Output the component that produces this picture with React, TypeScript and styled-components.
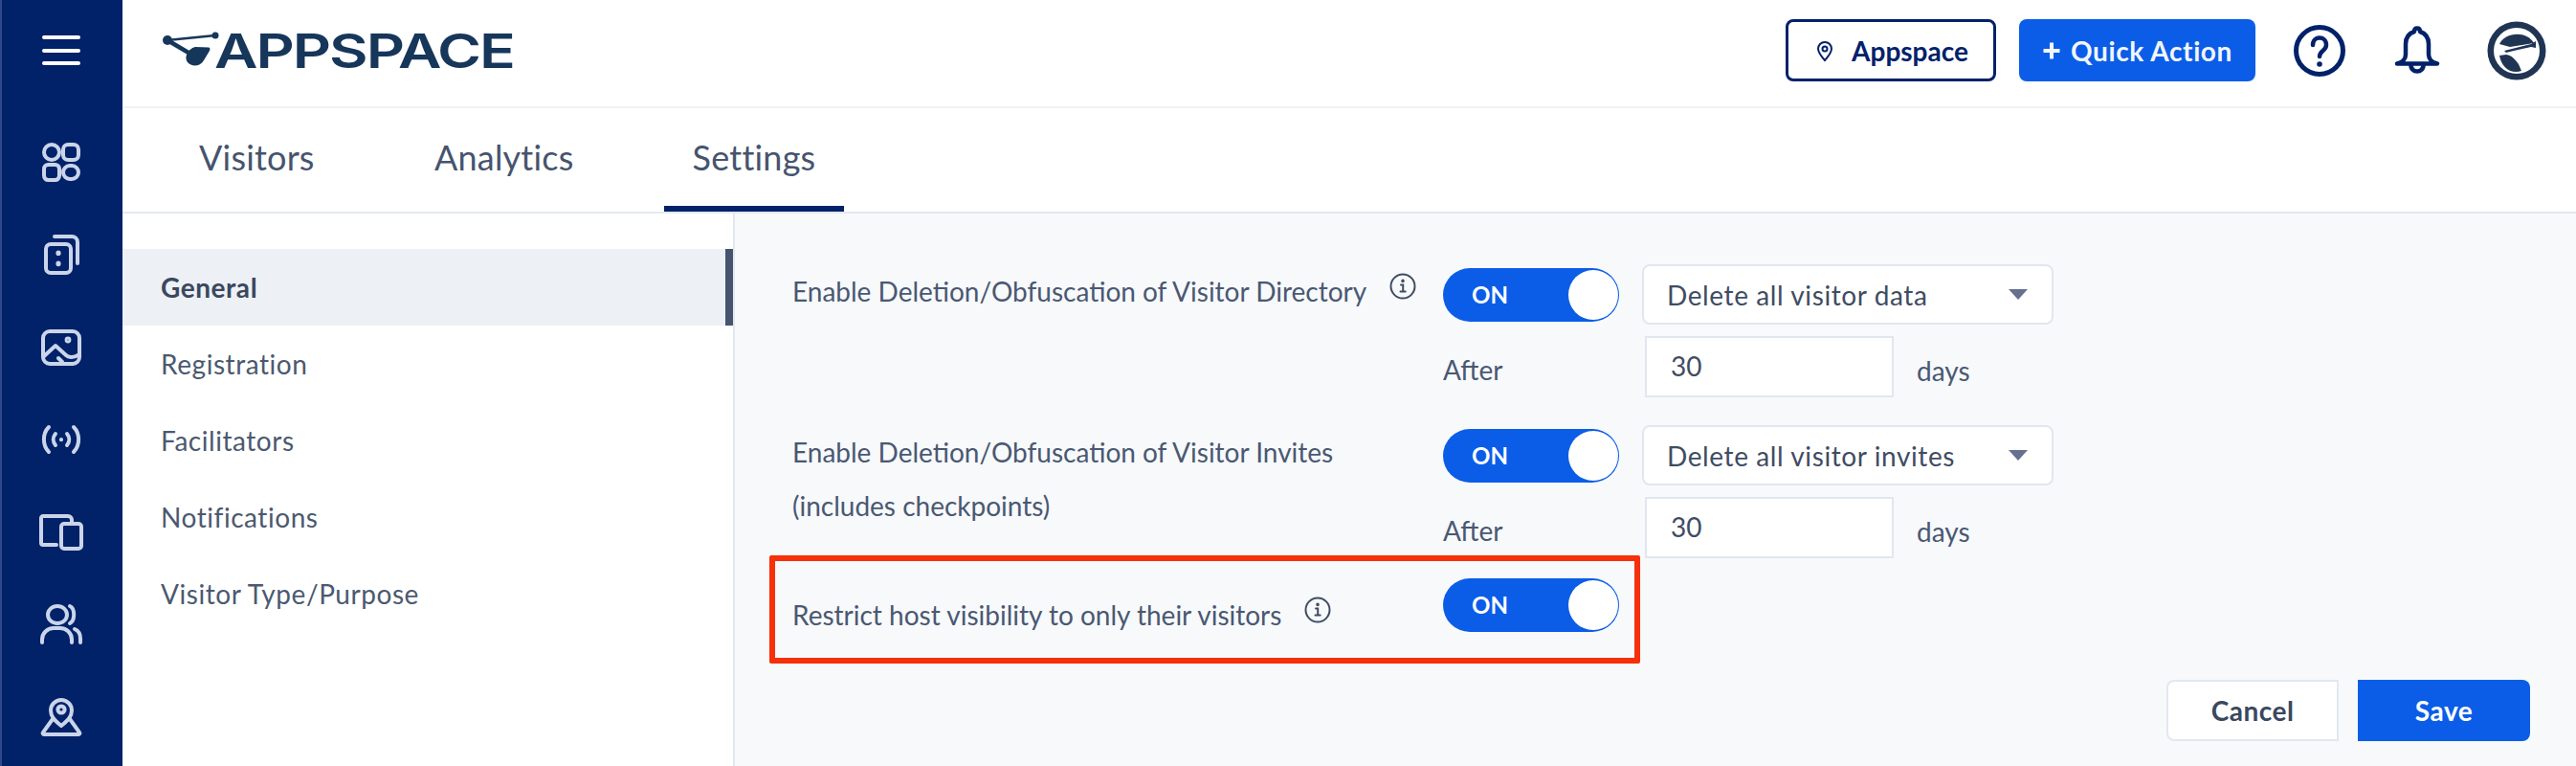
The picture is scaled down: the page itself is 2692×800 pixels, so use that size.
import React from 'react';
import styled, { createGlobalStyle } from 'styled-components';

const Global = createGlobalStyle`
  html, body { margin: 0; padding: 0; background: #fff; }
  * { box-sizing: border-box; }
  body { font-family: "Lato", "Open Sans", sans-serif; }
`;

const Page = styled.div`
  position: relative;
  display: flex;
  width: 2692px;
  height: 800px;
  overflow: hidden;
`;

const Rail = styled.aside`
  flex: 0 0 128px;
  display: flex;
  flex-direction: column;
  align-items: center;
  background: #012169;
  border-left: 2px solid #2e4a8c;
  padding-top: 37px;
  overflow: hidden;
`;

const Burger = styled.div`
  flex: none;
  display: flex;
  flex-direction: column;
  gap: 9.500px;
  width: 40px;
  margin-bottom: 78px;
  margin-right: 2px;
  span { display: block; height: 4px; border-radius: 2px; background: #fff; }
`;

const RailIcon = styled.div`
  flex: none;
  width: 48px;
  height: 48px;
  margin-bottom: 48.300px;
  margin-right: 2px;
  svg { display: block; width: 48px; height: 48px; fill: none; stroke: #cad5ea; stroke-width: 2; stroke-linecap: round; stroke-linejoin: round; }
`;

const Main = styled.div`
  flex: 1;
  min-width: 0;
  display: flex;
  flex-direction: column;
`;

const Header = styled.header`
  flex: 0 0 113px;
  display: flex;
  align-items: center;
  padding: 0 0 6px 42px;
  border-bottom: 2px solid #f0f2f5;
`;

const Logo = styled.div`
  display: flex;
  align-items: center;
  height: 40px;
  svg { display: block; width: 60px; height: 40px; margin-top: -1px; }
`;

const LogoWord = styled.span`
  font-family: "Inter", sans-serif;
  font-size: 50px;
  line-height: 40px;
  font-weight: 600;
  color: #16365a;
  letter-spacing: -1.600px;
  margin-left: -6px;
  transform: scaleX(1.250);
  transform-origin: left center;
`;

const HeaderRight = styled.div`
  margin-left: auto;
  display: flex;
  align-items: center;
`;

const LocationButton = styled.button`
  display: flex;
  align-items: center;
  justify-content: center;
  gap: 16px;
  width: 220px;
  height: 65px;
  margin-right: 24px;
  background: #fff;
  border: 3px solid #012169;
  border-radius: 8px;
  font: 700 28px "Lato", sans-serif;
  color: #012169;
  svg { width: 24px; height: 24px; fill: none; stroke: #012169; stroke-width: 2; }
`;

const QuickButton = styled.button`
  display: flex;
  align-items: center;
  justify-content: center;
  gap: 10px;
  width: 247px;
  height: 65px;
  margin-right: 39px;
  background: #0b5de8;
  border: none;
  border-radius: 8px;
  font: 700 28px "Lato", sans-serif;
  letter-spacing: 0.600px;
  color: #f2f6ff;
  svg { width: 20px; height: 20px; }
`;

const TopIcon = styled.div<{ $w: number; $gap: number }>`
  width: ${(p) => p.$w}px;
  margin-right: ${(p) => p.$gap}px;
  display: flex;
  justify-content: center;
  svg { display: block; }
`;

const Tabs = styled.nav`
  flex: 0 0 110px;
  display: flex;
  border-bottom: 2px solid #e2e8f0;
  padding-left: 80px;
`;

const Tab = styled.div<{ $active?: boolean; $w: number }>`
  width: ${(p) => p.$w}px;
  height: 108px;
  padding-top: 29px;
  font-size: 36px;
  line-height: 44px;
  letter-spacing: 0.200px;
  color: #46546e;
  text-align: ${(p) => (p.$active ? 'center' : 'left')};
  border-bottom: ${(p) => (p.$active ? '6px solid #012169' : 'none')};
`;

const Body = styled.div`
  flex: 1;
  display: flex;
  min-height: 0;
`;

const SideNav = styled.div`
  flex: 0 0 640px;
  padding-top: 37px;
  border-right: 2px solid #e2e8f0;
`;

const NavItem = styled.div<{ $active?: boolean }>`
  height: 80px;
  padding-left: 40px;
  display: flex;
  align-items: center;
  font-size: 28px;
  letter-spacing: 0.550px;
  font-weight: ${(p) => (p.$active ? 700 : 400)};
  color: ${(p) => (p.$active ? '#3a485f' : '#4b5970')};
  background: ${(p) => (p.$active ? '#edf1f5' : 'transparent')};
  border-right: ${(p) => (p.$active ? '8px solid #46546e' : 'none')};
`;

const Panel = styled.div`
  flex: 1;
  background: #f7f9fb;
  padding: 53px 48px 0 60px;
  display: flex;
  flex-direction: column;
`;

const SettingRow = styled.div<{ $h: number }>`
  display: grid;
  grid-template-columns: 680px 209px 429px;
  grid-template-rows: 63px auto;
  height: ${(p) => p.$h}px;
`;

const Label = styled.div<{ $top: number }>`
  grid-row: 1 / span 2;
  padding-top: ${(p) => p.$top}px;
  font-size: 28px;
  line-height: 56px;
  color: #4a5872;
`;

const Info = styled.svg`
  display: inline-block;
  width: 28px;
  height: 28px;
  margin-left: 24px;
  vertical-align: 2px;
  fill: none;
  stroke: #3f4c63;
  stroke-width: 2;
  stroke-linecap: round;
`;

const Toggle = styled.div<{ $top: number }>`
  position: relative;
  margin-top: ${(p) => p.$top}px;
  width: 184px;
  height: 56px;
  border-radius: 28px;
  background: #0b5de8;
  color: #fff;
  font-size: 24px;
  font-weight: 700;
  line-height: 56px;
  padding-left: 30px;
  &::after {
    content: '';
    position: absolute;
    top: 2px;
    right: 1px;
    width: 52px;
    height: 52px;
    border-radius: 50%;
    background: #fff;
  }
`;

const Select = styled.div`
  height: 63px;
  margin-left: -1px;
  display: flex;
  align-items: center;
  justify-content: space-between;
  padding: 0 25px 0 24px;
  background: #fff;
  border: 2px solid #e2e6f0;
  border-radius: 8px;
  font-size: 28px;
  letter-spacing: 0.600px;
  color: #3f4c63;
`;

const Caret = styled.span`
  width: 0;
  height: 0;
  border-left: 10px solid transparent;
  border-right: 10px solid transparent;
  border-top: 11px solid #65718f;
`;

const AfterLine = styled.div`
  grid-column: 2 / 4;
  display: flex;
  align-items: center;
  margin-top: 12px;
  height: 64px;
  font-size: 28px;
  color: #4a5872;
`;

const AfterLabel = styled.span`
  width: 211px;
  padding-top: 6px;
`;

const DaysInput = styled.div`
  width: 260px;
  height: 64px;
  display: flex;
  align-items: center;
  padding: 0 0 2px 25px;
  background: #fff;
  border: 2px solid #e2e6f0;
  color: #3f4c63;
`;

const Days = styled.span`
  margin-left: 24px;
  padding-top: 8px;
`;

const Highlight = styled.div`
  position: absolute;
  left: 804px;
  top: 580px;
  width: 910px;
  height: 113px;
  border: 6px solid #f5300b;
  border-radius: 2px;
  pointer-events: none;
`;

const Actions = styled.div`
  margin-top: auto;
  margin-bottom: 26px;
  display: flex;
  justify-content: flex-end;
  gap: 20px;
`;

const CancelButton = styled.button`
  width: 180px;
  height: 64px;
  background: #fff;
  border: 2px solid #e2e8f0;
  border-radius: 8px 0 0 8px;
  font: 700 28px "Lato", sans-serif;
  letter-spacing: 0.500px;
  color: #3a485f;
`;

const SaveButton = styled.button`
  width: 180px;
  height: 64px;
  background: #0b5de8;
  border: none;
  border-radius: 0 8px 8px 0;
  font: 700 28px "Lato", sans-serif;
  letter-spacing: 0.500px;
  color: #fff;
`;

const InfoIcon = () => (
  <Info viewBox="0 0 28 28">
    <circle cx="14" cy="14" r="12.500" />
    <path d="M12 12.500h2.200v7M11.500 19.500h5.200" />
    <circle cx="14" cy="8.400" r="0.800" />
  </Info>
);

const railIcons = [
  <svg viewBox="0 0 24 24" key="a"><rect x="3" y="2.500" width="8" height="8" rx="4" /><rect x="13" y="2.500" width="8" height="8" rx="2.600" /><rect x="3" y="13" width="8" height="8" rx="2.200" /><rect x="13" y="13.500" width="8" height="7" rx="3.500" /></svg>,
  <svg viewBox="0 0 24 24" key="b"><rect x="4" y="6.500" width="13" height="15" rx="2.500" /><path d="M8.500 2.500h9a3 3 0 0 1 3 3v11" /><path d="M10.500 11v.2M10.500 16.600v.2" strokeWidth="2.600" /></svg>,
  <svg viewBox="0 0 24 24" key="c"><rect x="2.500" y="3.500" width="19" height="17" rx="3.500" /><path d="M3 16.500l6-5.500 5.500 5c1 .9 3.600 1.800 6.500-.2" /><path d="M12.500 19.500l-2-2" /><circle cx="15.500" cy="8" r="0.700" /></svg>,
  <svg viewBox="0 0 24 24" key="d"><path d="M5.500 5.500c-3.400 3.400-3.400 9.600 0 13M18.500 5.500c3.400 3.400 3.400 9.600 0 13M9 9c-1.500 1.800-1.500 4.200 0 6M15 9c1.500 1.800 1.500 4.200 0 6" /><path d="M12 12v.1" /></svg>,
  <svg viewBox="0 0 24 24" key="e"><path d="M9.500 19H2.500a1 1 0 0 1-1-1V5a1 1 0 0 1 1-1h13a2 2 0 0 1 2 2v2" /><rect x="12" y="8" width="10.500" height="13" rx="1.500" /></svg>,
  <svg viewBox="0 0 24 24" key="f"><ellipse cx="10" cy="7.500" rx="5" ry="4.500" /><path d="M2 22v-1.500a6 6 0 0 1 6-6h3.500a6 6 0 0 1 6 6V22" /><path d="M16.500 3c2.800 1.200 2.800 7.500 0 9M19 15c2 .8 3 3 3 5v2" /></svg>,
  <svg viewBox="0 0 24 24" key="g"><path d="M12 17c-3-2.600-5.500-4.500-5.500-8a5.500 5.500 0 0 1 11 0c0 3.500-2.500 5.400-5.500 8z" /><circle cx="12" cy="8.500" r="1.800" /><path d="M7.500 13.500L2.500 20.500a.6.600 0 0 0 .5 1h18a.6.600 0 0 0 .5-1l-5-7" /></svg>,
];

export default function App() {
  return (
    <Page>
      <Global />
      <Rail>
        <Burger><span /><span /><span /></Burger>
        {railIcons.map((icon) => (
          <RailIcon key={icon.key}>{icon}</RailIcon>
        ))}
      </Rail>
      <Main>
        <Header>
          <Logo>
            <svg viewBox="0 0 60 40" aria-hidden="true">
              <g fill="#16365a" stroke="#16365a">
                <path d="M5 10L55 5" strokeWidth="2.600" fill="none" />
                <path d="M5 10L32 26" strokeWidth="4.500" fill="none" />
                <circle cx="5" cy="10" r="5" stroke="none" />
                <circle cx="55" cy="5" r="3.500" stroke="none" />
                <path d="M34 17L48 17.500C50 18 49.500 20 49 21L43 31C39 38 30 38 26 33C22 28 26 19 34 17Z" stroke="none" />
              </g>
            </svg>
            <LogoWord>APPSPACE</LogoWord>
          </Logo>
          <HeaderRight>
            <LocationButton>
              <svg viewBox="0 0 24 24"><path d="M12 22c-4-4.500-7-8-7-12a7 7 0 0 1 14 0c0 4-3 7.500-7 12z" /><circle cx="12" cy="10" r="2.500" /></svg>
              Appspace
            </LocationButton>
            <QuickButton>
              <svg viewBox="0 0 20 20"><path d="M8 1.500h4V8h6.500v4H12v6.500H8V12H1.500V8H8z" fill="#f2f6ff" /></svg>
              Quick Action
            </QuickButton>
            <TopIcon $w={56} $gap={50}>
              <svg width="56" height="56" viewBox="0 0 56 56" fill="none" stroke="#012169">
                <circle cx="28" cy="28" r="24.500" strokeWidth="5" />
                <path d="M21 22c0-10 14-10 14 0 0 6-7 6-7 12" strokeWidth="4.500" strokeLinecap="round" />
                <circle cx="28" cy="42" r="2.800" fill="#012169" stroke="none" />
              </svg>
            </TopIcon>
            <TopIcon $w={48} $gap={49}>
              <svg width="48" height="52" viewBox="0 0 48 52" fill="none" stroke="#012169" strokeWidth="4.500" strokeLinejoin="round" strokeLinecap="round">
                <path d="M24 2.500c2 0 3 1.500 3 3.500 6 2 9 7 9 13v11c0 4 3 8 9 9.500H3c6-1.500 9-5.500 9-9.500V19c0-6 3-11 9-13 0-2 1-3.500 3-3.500z" />
                <path d="M17.500 40c-1 10 14 10 13 0" />
              </svg>
            </TopIcon>
            <TopIcon $w={62} $gap={31}>
              <svg width="62" height="62" viewBox="0 0 62 62" fill="none">
                <circle cx="31" cy="31" r="30.500" fill="#1f3553" />
                <circle cx="31" cy="31" r="24" fill="#fff" />
                <path d="M13 24C18 12 41 9 49 23L24 27Z" fill="#1f3553" />
                <path d="M13 36l7-1c6 .4 10 6 13 10l3 7C26 56 15 49 13 36z" fill="#1f3553" />
                <path d="M18 31l28-7 5-3 0 7-5-1-18 4-8 2z" fill="#1f3553" />
              </svg>
            </TopIcon>
          </HeaderRight>
        </Header>
        <Tabs>
          <Tab $w={246}>Visitors</Tab>
          <Tab $w={240}>Analytics</Tab>
          <Tab $w={188} $active>Settings</Tab>
        </Tabs>
        <Body>
          <SideNav>
            <NavItem $active>General</NavItem>
            <NavItem>Registration</NavItem>
            <NavItem>Facilitators</NavItem>
            <NavItem>Notifications</NavItem>
            <NavItem>Visitor Type/Purpose</NavItem>
          </SideNav>
          <Panel>
            <SettingRow $h={168}>
              <Label $top={0}>Enable Deletion/Obfuscation of Visitor Directory<InfoIcon /></Label>
              <Toggle $top={4}>ON</Toggle>
              <Select>Delete all visitor data<Caret /></Select>
              <AfterLine>
                <AfterLabel>After</AfterLabel>
                <DaysInput>30</DaysInput>
                <Days>days</Days>
              </AfterLine>
            </SettingRow>
            <SettingRow $h={160}>
              <Label $top={0}>Enable Deletion/Obfuscation of Visitor Invites<br />(includes checkpoints)</Label>
              <Toggle $top={4}>ON</Toggle>
              <Select>Delete all visitor invites<Caret /></Select>
              <AfterLine>
                <AfterLabel>After</AfterLabel>
                <DaysInput>30</DaysInput>
                <Days>days</Days>
              </AfterLine>
            </SettingRow>
            <SettingRow $h={64}>
              <Label $top={10}>Restrict host visibility to only their visitors<InfoIcon /></Label>
              <Toggle $top={0}>ON</Toggle>
            </SettingRow>
            <Actions>
              <CancelButton>Cancel</CancelButton>
              <SaveButton>Save</SaveButton>
            </Actions>
          </Panel>
        </Body>
      </Main>
      <Highlight />
    </Page>
  );
}
